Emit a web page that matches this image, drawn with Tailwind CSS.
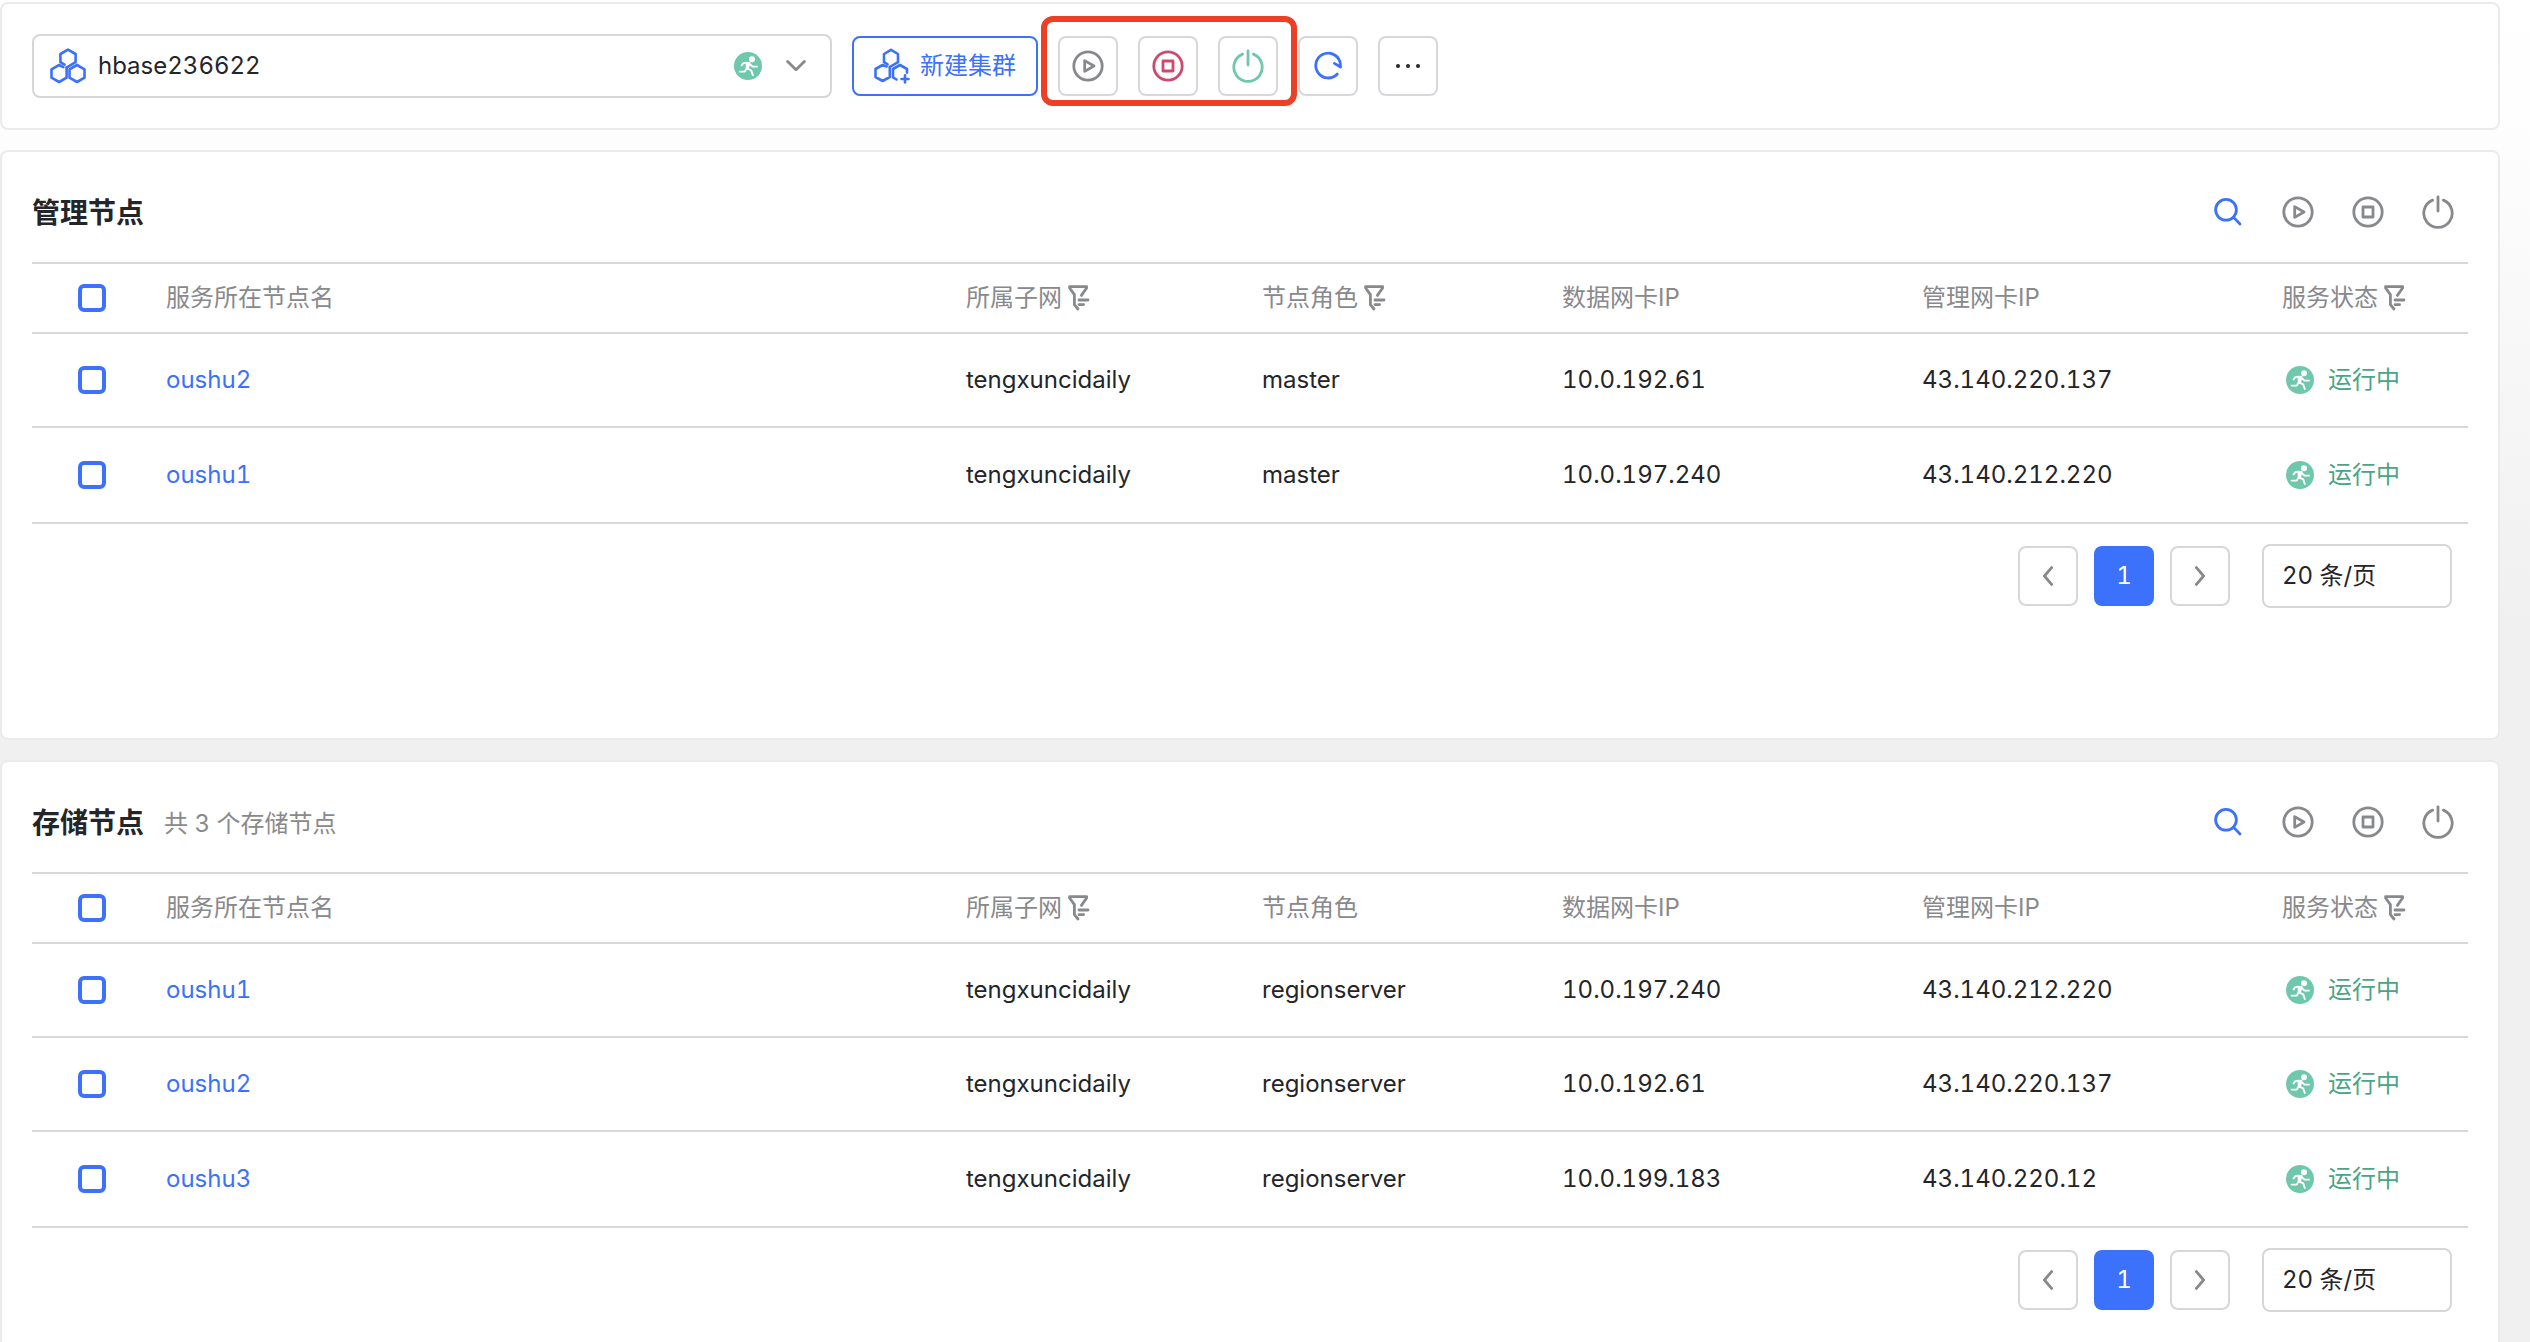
<!DOCTYPE html>
<html lang="zh-CN">
<head>
<meta charset="utf-8">
<meta name="viewport" content="width=device-width, initial-scale=1">
<title>hbase236622</title>
<script src="https://cdn.jsdelivr.net/npm/@tailwindcss/browser@4"></script>
</head>
<body class="min-h-screen flex flex-col gap-5 pt-[2px] pr-[30px] bg-[linear-gradient(to_bottom,#ffffff_0px,#fdfdfd_150px,#f0f0f0_620px)] font-['Inter','Noto_Sans_CJK_SC',sans-serif] text-2xl tabular-nums text-[#242529]">

<svg class="hidden" aria-hidden="true">
  <symbol id="cluster" viewBox="0 0 36 36" fill="none" stroke="currentColor" stroke-width="2.6" stroke-linecap="round" stroke-linejoin="round">
    <path d="M16.6 19.6 L25.6 14.2 V6 L18 1.6 L10.4 6 V14.2 L14.6 16.6"/>
    <path d="M13.4 19.2 L9.1 17 L1.5 21.3 V29.7 L9.1 34 L16.6 29.7 V19.6"/>
    <path d="M27 17 L34.5 21.3 V29.7 L27 34 L19.5 29.7 V21.3 Z"/>
  </symbol>
  <symbol id="cluster-add" viewBox="0 0 36 36" fill="none" stroke="currentColor" stroke-width="2.6" stroke-linecap="round" stroke-linejoin="round">
    <path d="M15.8 19 L24 14.2 V6 L17 1.8 L10 6 V14.2 L13.6 16.4"/>
    <path d="M12.6 18.6 L8.6 17 L1.5 21 V29 L8.6 33 L15.8 29 V19"/>
    <path d="M22.5 31.5 L19 29.4 V21 L26 17 L33 21 V24.6"/>
    <path d="M31 27.4 V34.4 M27.5 31 H34.5"/>
  </symbol>
  <symbol id="run" viewBox="0 0 28 28">
    <circle cx="14" cy="14" r="14" fill="#6fc8ab"/>
    <circle cx="18" cy="7.2" r="3" fill="#fff"/>
    <g fill="none" stroke="#fff" stroke-width="1.9" stroke-linecap="round" stroke-linejoin="round">
      <path d="M7.6 13.4 C8.6 10.8 11.4 10.2 15.2 11 L12.6 17 M16.4 12.6 L18.6 14.6 H23"/>
      <path d="M13 16.4 L17.2 18.4 L18.8 23 M12.4 16.8 L10.8 19.6 H5.6"/>
    </g>
    <path d="M11.6 10.2 L16.8 10.6 L14.6 17.4 L11.8 17 Z" fill="#fff"/>
  </symbol>
  <symbol id="play" viewBox="0 0 32 32" fill="none" stroke="currentColor" stroke-width="2.8" stroke-linejoin="round">
    <circle cx="16" cy="16" r="14.2"/><path d="M12.7 10.6 L22 16 L12.7 21.4 Z"/>
  </symbol>
  <symbol id="stop" viewBox="0 0 32 32" fill="none" stroke="currentColor" stroke-width="2.8" stroke-linejoin="round">
    <circle cx="16" cy="16" r="14.2"/><path d="M11 11 H21 V21 H11 Z"/>
  </symbol>
  <symbol id="power" viewBox="0 0 32 34" fill="none" stroke="currentColor" stroke-width="2.8" stroke-linecap="round">
    <path d="M16 1.8 V16"/><path d="M10.6 5.1 A14.2 14.2 0 1 0 21.4 5.1"/>
  </symbol>
  <symbol id="refresh" viewBox="0 0 32 32" fill="none" stroke="currentColor" stroke-width="2.8" stroke-linecap="round" stroke-linejoin="round">
    <path d="M25.3 24 A12.4 12.4 0 1 1 28 11.8 L28.6 17 L22.4 13.4"/>
  </symbol>
  <symbol id="search" viewBox="0 0 32 32" fill="none" stroke="currentColor" stroke-width="2.8" stroke-linecap="round">
    <circle cx="14" cy="13.8" r="10.4"/><path d="M21.6 21.4 L28 28"/>
  </symbol>
  <symbol id="filter" viewBox="0 0 22 26" fill="none" stroke="currentColor" stroke-width="2.8" stroke-linecap="round" stroke-linejoin="round">
    <path d="M13.4 10.4 L18.6 3 V1.6 H1.6 V3 L6.4 9.6 V19.6 L10 24"/><path d="M11 15 H20 M11 19.6 H15.6"/>
  </symbol>
  <symbol id="down" viewBox="0 0 20 12" fill="none" stroke="currentColor" stroke-width="2.8" stroke-linecap="round" stroke-linejoin="round"><path d="M1.6 1.6 L10 9.8 L18.4 1.6"/></symbol>
  <symbol id="left" viewBox="0 0 12 20" fill="none" stroke="currentColor" stroke-width="2.8" stroke-linecap="round" stroke-linejoin="round"><path d="M9.6 1.6 L2.4 10 L9.6 18.4"/></symbol>
  <symbol id="right" viewBox="0 0 12 20" fill="none" stroke="currentColor" stroke-width="2.8" stroke-linecap="round" stroke-linejoin="round"><path d="M2.4 1.6 L9.6 10 L2.4 18.4"/></symbol>
</svg>

<header class="flex items-center gap-5 h-32 px-[30px] bg-white border-2 border-[#ebebeb] rounded-lg">
  <label class="flex items-center w-[800px] h-16 pl-4 pr-6 border-2 border-[#d7d7d9] rounded-lg">
    <svg class="size-9 text-[#3b71fb]"><use href="#cluster"/></svg>
    <select aria-label="集群" class="appearance-none flex-1 ml-3 outline-none"><option>hbase236622</option></select>
    <svg class="size-7"><use href="#run"/></svg>
    <svg class="w-5 h-3 ml-6 text-[#88898c]"><use href="#down"/></svg>
  </label>
  <button class="flex items-center gap-[10px] h-[60px] px-5 border-2 border-[#3b71fb] rounded-lg text-[#3b71fb] whitespace-nowrap">
    <svg class="size-9"><use href="#cluster-add"/></svg>新建集群
  </button>
  <div class="relative flex gap-5">
    <button aria-label="启动" class="grid place-items-center size-[60px] border-2 border-[#d7d7dc] rounded-lg text-[#88898c]"><svg class="size-8"><use href="#play"/></svg></button>
    <button aria-label="停止" class="grid place-items-center size-[60px] border-2 border-[#d7d7dc] rounded-lg text-[#cc4a70]"><svg class="size-8"><use href="#stop"/></svg></button>
    <button aria-label="重启" class="grid place-items-center size-[60px] border-2 border-[#d7d7dc] rounded-lg text-[#6fc8ab]"><svg class="w-8 h-[34px]"><use href="#power"/></svg></button>
    <div class="absolute -left-[17px] -right-[19px] -top-5 -bottom-[10px] border-6 border-[#ec4026] rounded-xl pointer-events-none"></div>
  </div>
  <button aria-label="刷新" class="grid place-items-center size-[60px] border-2 border-[#d7d7dc] rounded-lg text-[#3b71fb]"><svg class="size-8"><use href="#refresh"/></svg></button>
  <button aria-label="更多" class="flex items-center justify-center gap-1.5 size-[60px] border-2 border-[#d7d7dc] rounded-lg">
    <span class="size-1 rounded-full bg-[#242529]"></span><span class="size-1 rounded-full bg-[#242529]"></span><span class="size-1 rounded-full bg-[#242529]"></span>
  </button>
</header>

<main class="flex-1 flex flex-col gap-5">
<section class="px-[30px] pb-[130px] bg-white border-2 border-[#ebebeb] rounded-lg">
  <div class="flex items-center h-[110px] pt-[10px] pr-[14px]">
    <h2 class="pt-1 text-[28px] font-bold">管理节点</h2>
    <div class="flex items-center gap-[38px] ml-auto text-[#88898c]">
      <button aria-label="搜索" class="text-[#3b71fb]"><svg class="size-8"><use href="#search"/></svg></button>
      <button aria-label="启动"><svg class="size-8"><use href="#play"/></svg></button>
      <button aria-label="停止"><svg class="size-8"><use href="#stop"/></svg></button>
      <button aria-label="重启"><svg class="w-8 h-[34px]"><use href="#power"/></svg></button>
    </div>
  </div>
  <table class="w-full table-fixed border-separate border-spacing-0 border-t-2 border-b-2 border-[#d7d7dc] text-left [&_th]:h-[70px] [&_td]:h-[94px] [&_th]:border-b-2 [&_td]:border-b-2 [&_tbody_tr:last-child_td]:border-b-0 [&_th]:border-[#d7d7dc] [&_td]:border-[#d7d7dc] [&_th]:pl-4 [&_td]:pl-4 [&_th]:font-normal [&_th]:text-[#88898c]">
    <colgroup><col class="w-[118px]"><col><col class="w-[296px]"><col class="w-[300px]"><col class="w-[360px]"><col class="w-[360px]"><col class="w-[202px]"></colgroup>
    <thead>
      <tr>
        <th><input type="checkbox" aria-label="全选" class="block appearance-none size-7 ml-[30px] border-4 border-[#3b71fb] rounded-md"></th>
        <th>服务所在节点名</th>
        <th><span class="flex items-center gap-1.5">所属子网<svg class="w-[22px] h-[26px]"><use href="#filter"/></svg></span></th>
        <th><span class="flex items-center gap-1.5">节点角色<svg class="w-[22px] h-[26px]"><use href="#filter"/></svg></span></th>
        <th>数据网卡IP</th>
        <th>管理网卡IP</th>
        <th><span class="flex items-center gap-1.5">服务状态<svg class="w-[22px] h-[26px]"><use href="#filter"/></svg></span></th>
      </tr>
    </thead>
    <tbody>
      <tr>
        <td><input type="checkbox" aria-label="oushu2" class="block appearance-none size-7 ml-[30px] border-4 border-[#3b71fb] rounded-md"></td>
        <td><a href="#" class="text-[#3b71fb]">oushu2</a></td><td>tengxuncidaily</td><td>master</td><td>10.0.192.61</td><td>43.140.220.137</td>
        <td><span class="flex items-center gap-[14px] pl-1 text-[#4aa583]"><svg class="size-7"><use href="#run"/></svg>运行中</span></td>
      </tr>
      <tr>
        <td><input type="checkbox" aria-label="oushu1" class="block appearance-none size-7 ml-[30px] border-4 border-[#3b71fb] rounded-md"></td>
        <td><a href="#" class="text-[#3b71fb]">oushu1</a></td><td>tengxuncidaily</td><td>master</td><td>10.0.197.240</td><td>43.140.212.220</td>
        <td><span class="flex items-center gap-[14px] pl-1 text-[#4aa583]"><svg class="size-7"><use href="#run"/></svg>运行中</span></td>
      </tr>
    </tbody>
  </table>
  <nav aria-label="分页" class="flex items-center justify-end gap-4 mt-5 pr-4">
    <button aria-label="上一页" class="grid place-items-center size-[60px] border-2 border-[#d7d7d9] rounded-lg text-[#88898c]"><svg class="w-3 h-5"><use href="#left"/></svg></button>
    <button class="size-[60px] rounded-lg bg-[#3b71fb] text-white">1</button>
    <button aria-label="下一页" class="grid place-items-center size-[60px] border-2 border-[#d7d7d9] rounded-lg text-[#88898c]"><svg class="w-3 h-5"><use href="#right"/></svg></button>
    <select aria-label="每页条数" class="appearance-none w-[190px] h-16 ml-4 px-[18px] border-2 border-[#d7d7d9] rounded-lg"><option>20 条/页</option></select>
  </nav>
</section>

<section class="flex-1 px-[30px] bg-white border-2 border-b-0 border-[#ebebeb] rounded-t-lg">
  <div class="flex items-center h-[110px] pt-[10px] pr-[14px]">
    <h2 class="pt-1 text-[28px] font-bold">存储节点</h2>
    <p class="ml-5 pt-1 text-[#88898c]">共 3 个存储节点</p>
    <div class="flex items-center gap-[38px] ml-auto text-[#88898c]">
      <button aria-label="搜索" class="text-[#3b71fb]"><svg class="size-8"><use href="#search"/></svg></button>
      <button aria-label="启动"><svg class="size-8"><use href="#play"/></svg></button>
      <button aria-label="停止"><svg class="size-8"><use href="#stop"/></svg></button>
      <button aria-label="重启"><svg class="w-8 h-[34px]"><use href="#power"/></svg></button>
    </div>
  </div>
  <table class="w-full table-fixed border-separate border-spacing-0 border-t-2 border-b-2 border-[#d7d7dc] text-left [&_th]:h-[70px] [&_td]:h-[94px] [&_th]:border-b-2 [&_td]:border-b-2 [&_tbody_tr:last-child_td]:border-b-0 [&_th]:border-[#d7d7dc] [&_td]:border-[#d7d7dc] [&_th]:pl-4 [&_td]:pl-4 [&_th]:font-normal [&_th]:text-[#88898c]">
    <colgroup><col class="w-[118px]"><col><col class="w-[296px]"><col class="w-[300px]"><col class="w-[360px]"><col class="w-[360px]"><col class="w-[202px]"></colgroup>
    <thead>
      <tr>
        <th><input type="checkbox" aria-label="全选" class="block appearance-none size-7 ml-[30px] border-4 border-[#3b71fb] rounded-md"></th>
        <th>服务所在节点名</th>
        <th><span class="flex items-center gap-1.5">所属子网<svg class="w-[22px] h-[26px]"><use href="#filter"/></svg></span></th>
        <th>节点角色</th>
        <th>数据网卡IP</th>
        <th>管理网卡IP</th>
        <th><span class="flex items-center gap-1.5">服务状态<svg class="w-[22px] h-[26px]"><use href="#filter"/></svg></span></th>
      </tr>
    </thead>
    <tbody>
      <tr>
        <td><input type="checkbox" aria-label="oushu1" class="block appearance-none size-7 ml-[30px] border-4 border-[#3b71fb] rounded-md"></td>
        <td><a href="#" class="text-[#3b71fb]">oushu1</a></td><td>tengxuncidaily</td><td>regionserver</td><td>10.0.197.240</td><td>43.140.212.220</td>
        <td><span class="flex items-center gap-[14px] pl-1 text-[#4aa583]"><svg class="size-7"><use href="#run"/></svg>运行中</span></td>
      </tr>
      <tr>
        <td><input type="checkbox" aria-label="oushu2" class="block appearance-none size-7 ml-[30px] border-4 border-[#3b71fb] rounded-md"></td>
        <td><a href="#" class="text-[#3b71fb]">oushu2</a></td><td>tengxuncidaily</td><td>regionserver</td><td>10.0.192.61</td><td>43.140.220.137</td>
        <td><span class="flex items-center gap-[14px] pl-1 text-[#4aa583]"><svg class="size-7"><use href="#run"/></svg>运行中</span></td>
      </tr>
      <tr>
        <td><input type="checkbox" aria-label="oushu3" class="block appearance-none size-7 ml-[30px] border-4 border-[#3b71fb] rounded-md"></td>
        <td><a href="#" class="text-[#3b71fb]">oushu3</a></td><td>tengxuncidaily</td><td>regionserver</td><td>10.0.199.183</td><td>43.140.220.12</td>
        <td><span class="flex items-center gap-[14px] pl-1 text-[#4aa583]"><svg class="size-7"><use href="#run"/></svg>运行中</span></td>
      </tr>
    </tbody>
  </table>
  <nav aria-label="分页" class="flex items-center justify-end gap-4 mt-5 pr-4">
    <button aria-label="上一页" class="grid place-items-center size-[60px] border-2 border-[#d7d7d9] rounded-lg text-[#88898c]"><svg class="w-3 h-5"><use href="#left"/></svg></button>
    <button class="size-[60px] rounded-lg bg-[#3b71fb] text-white">1</button>
    <button aria-label="下一页" class="grid place-items-center size-[60px] border-2 border-[#d7d7d9] rounded-lg text-[#88898c]"><svg class="w-3 h-5"><use href="#right"/></svg></button>
    <select aria-label="每页条数" class="appearance-none w-[190px] h-16 ml-4 px-[18px] border-2 border-[#d7d7d9] rounded-lg"><option>20 条/页</option></select>
  </nav>
</section>
</main>
</body>
</html>
